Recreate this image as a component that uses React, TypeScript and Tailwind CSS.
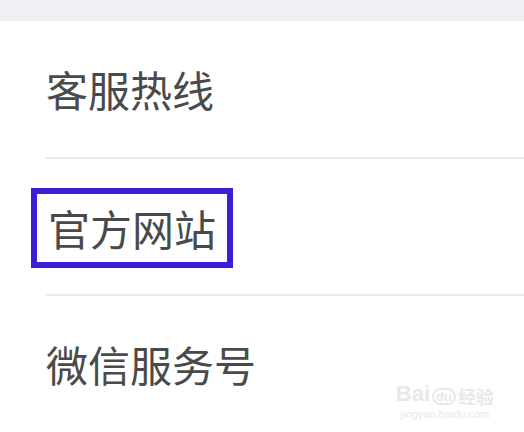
export default function App() {
  const font = { fontFamily: '"Noto Sans CJK SC", "Noto Sans", sans-serif' };

  return (
    <div
      className="relative w-[524px] h-[432px] overflow-hidden bg-white flex flex-col"
      style={font}
    >
      {/* top grey band */}
      <div className="h-[21px] bg-[#efeff4] shrink-0" />

      {/* row 1 */}
      <div className="h-[136px] flex items-center pl-[46px]">
        <span className="text-[42px] leading-none text-[#4a4a4a]">客服热线</span>
      </div>
      <div className="ml-[45px] h-[2px] bg-[#ececec]" />

      {/* row 2 (highlighted) */}
      <div className="h-[136px] flex items-center pl-[31px]">
        <span className="mt-[2px] border-[6px] border-[#3a1fd4] pl-[11px] pr-[11px] py-[13px] text-[42px] leading-none text-[#4a4a4a]">
          官方网站
        </span>
      </div>
      <div className="ml-[45px] h-[2px] bg-[#ececec]" />

      {/* row 3 */}
      <div className="h-[136px] flex items-center pl-[46px]">
        <span className="text-[42px] leading-none text-[#4a4a4a]">微信服务号</span>
      </div>

      {/* watermark */}
      <div className="absolute right-[30px] bottom-[12px] flex flex-col items-center text-[#e8e8e8]">
        <div className="flex items-end gap-[2px]">
          <span className="text-[22px] font-bold leading-none" style={{ fontFamily: '"Liberation Sans", sans-serif' }}>
            Bai
          </span>
          <span className="text-[13px] font-bold leading-none border-[2px] border-[#e8e8e8] rounded-full px-[2px]" style={{ fontFamily: '"Liberation Sans", sans-serif' }}>
            du
          </span>
          <span className="text-[18px] font-bold leading-none">经验</span>
        </div>
        <span className="text-[11px] leading-none mt-[4px]" style={{ fontFamily: '"Liberation Sans", sans-serif' }}>
          jingyan.baidu.com
        </span>
      </div>
    </div>
  );
}
